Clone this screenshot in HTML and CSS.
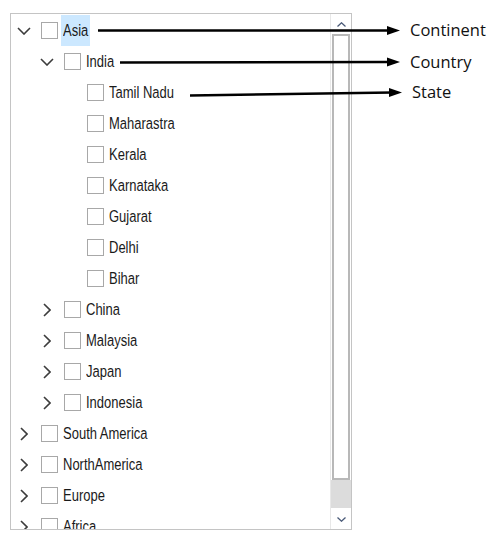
FILE: index.html
```html
<!DOCTYPE html>
<html>
<head>
<meta charset="utf-8">
<link rel="stylesheet" href="styles.css">
</head>
<body>
<div class="page">
  <div class="tree">
    <div class="list">
      <div class="row lvl0"><span class="toggle"><svg class="chev-down" viewBox="0 0 14 8"><path d="M1 1 L7 7 L13 1"/></svg></span><span class="check"></span><span class="label selected"><span class="txt">Asia</span></span></div>
      <div class="row lvl1"><span class="toggle"><svg class="chev-down" viewBox="0 0 14 8"><path d="M1 1 L7 7 L13 1"/></svg></span><span class="check"></span><span class="label"><span class="txt">India</span></span></div>
      <div class="row lvl2"><span class="toggle"></span><span class="check"></span><span class="label"><span class="txt">Tamil Nadu</span></span></div>
      <div class="row lvl2"><span class="toggle"></span><span class="check"></span><span class="label"><span class="txt">Maharastra</span></span></div>
      <div class="row lvl2"><span class="toggle"></span><span class="check"></span><span class="label"><span class="txt">Kerala</span></span></div>
      <div class="row lvl2"><span class="toggle"></span><span class="check"></span><span class="label"><span class="txt">Karnataka</span></span></div>
      <div class="row lvl2"><span class="toggle"></span><span class="check"></span><span class="label"><span class="txt">Gujarat</span></span></div>
      <div class="row lvl2"><span class="toggle"></span><span class="check"></span><span class="label"><span class="txt">Delhi</span></span></div>
      <div class="row lvl2"><span class="toggle"></span><span class="check"></span><span class="label"><span class="txt">Bihar</span></span></div>
      <div class="row lvl1"><span class="toggle"><svg class="chev-right" viewBox="0 0 8 14"><path d="M1 1 L7 7 L1 13"/></svg></span><span class="check"></span><span class="label"><span class="txt">China</span></span></div>
      <div class="row lvl1"><span class="toggle"><svg class="chev-right" viewBox="0 0 8 14"><path d="M1 1 L7 7 L1 13"/></svg></span><span class="check"></span><span class="label"><span class="txt">Malaysia</span></span></div>
      <div class="row lvl1"><span class="toggle"><svg class="chev-right" viewBox="0 0 8 14"><path d="M1 1 L7 7 L1 13"/></svg></span><span class="check"></span><span class="label"><span class="txt">Japan</span></span></div>
      <div class="row lvl1"><span class="toggle"><svg class="chev-right" viewBox="0 0 8 14"><path d="M1 1 L7 7 L1 13"/></svg></span><span class="check"></span><span class="label"><span class="txt">Indonesia</span></span></div>
      <div class="row lvl0"><span class="toggle"><svg class="chev-right" viewBox="0 0 8 14"><path d="M1 1 L7 7 L1 13"/></svg></span><span class="check"></span><span class="label"><span class="txt">South America</span></span></div>
      <div class="row lvl0"><span class="toggle"><svg class="chev-right" viewBox="0 0 8 14"><path d="M1 1 L7 7 L1 13"/></svg></span><span class="check"></span><span class="label"><span class="txt">NorthAmerica</span></span></div>
      <div class="row lvl0"><span class="toggle"><svg class="chev-right" viewBox="0 0 8 14"><path d="M1 1 L7 7 L1 13"/></svg></span><span class="check"></span><span class="label"><span class="txt">Europe</span></span></div>
      <div class="row lvl0"><span class="toggle"><svg class="chev-right" viewBox="0 0 8 14"><path d="M1 1 L7 7 L1 13"/></svg></span><span class="check"></span><span class="label"><span class="txt">Africa</span></span></div>
    </div>
    <div class="scrollbar">
      <div class="sb-btn"><svg class="sb-arrow" viewBox="0 0 9 5"><path d="M0.5 4.5 L4.5 0.8 L8.5 4.5"/></svg></div>
      <div class="sb-thumb"></div>
      <div class="sb-track"></div>
      <div class="sb-btn"><svg class="sb-arrow" viewBox="0 0 9 5"><path d="M0.5 0.5 L4.5 4.2 L8.5 0.5"/></svg></div>
    </div>
  </div>
  <svg class="annotations" viewBox="0 0 489 541">
    <line x1="98" y1="30.5" x2="390" y2="30.5" class="arrow-line"/>
    <polygon points="387,26 400,30.5 387,35" class="arrow-head"/>
    <line x1="120" y1="62.5" x2="390" y2="62" class="arrow-line"/>
    <polygon points="387,57.5 400,62 387,66.5" class="arrow-head"/>
    <line x1="190" y1="95.5" x2="392" y2="92.5" class="arrow-line"/>
    <polygon points="389,88 402,92.5 389,97" class="arrow-head"/>
    <text x="410" y="36" class="note">Continent</text>
    <text x="410" y="68" class="note">Country</text>
    <text x="412" y="98" class="note">State</text>
  </svg>
</div>
</body>
</html>
```
FILE: styles.css
```css
html, body {
  margin: 0;
  padding: 0;
  background: #ffffff;
}

.page {
  position: relative;
  width: 489px;
  height: 541px;
  padding: 13px 0 0 10px;
  box-sizing: border-box;
}

.tree {
  width: 342px;
  height: 517px;
  border: 1px solid #c4c4c4;
  box-sizing: border-box;
  display: flex;
  overflow: hidden;
  background: #fff;
}

.list {
  flex: 1;
  overflow: hidden;
  padding-top: 1px;
}

.row {
  display: flex;
  align-items: center;
  height: 31px;
  font-family: "Liberation Sans", Arial, sans-serif;
  font-size: 13px;
  color: #1a1a1a;
  white-space: nowrap;
}

.lvl0 { padding-left: 0; }
.lvl1 { padding-left: 23px; }
.lvl2 { padding-left: 46px; }

.toggle {
  width: 26px;
  height: 31px;
  display: flex;
  align-items: center;
  justify-content: center;
  flex: none;
}

.chev-down {
  width: 14px;
  height: 8px;
}

.chev-right {
  width: 8px;
  height: 14px;
}

.chev-down path,
.chev-right path {
  fill: none;
  stroke: #3c3c3c;
  stroke-width: 1.6;
}

.check {
  width: 17px;
  height: 17px;
  margin-left: 4px;
  border: 1px solid #a8a8a8;
  box-sizing: border-box;
  background: #fff;
  flex: none;
}

.label {
  margin-left: 3px;
  padding: 0 2px;
  height: 31px;
  line-height: 31px;
}

.txt {
  display: inline-block;
  transform: scaleY(1.22);
}

.label.selected {
  background: #cce8ff;
}

.scrollbar {
  width: 20px;
  flex: none;
  display: flex;
  flex-direction: column;
  border-left: 1px solid #e8e8e8;
  background: #ffffff;
}

.sb-btn {
  height: 20px;
  display: flex;
  align-items: center;
  justify-content: center;
  flex: none;
}

.sb-arrow {
  width: 9px;
  height: 5px;
}

.sb-arrow path {
  fill: none;
  stroke: #4a5a78;
  stroke-width: 1.3;
}

.sb-thumb {
  height: 446px;
  margin: 0 1px;
  border: 2px solid #b8b8b8;
  box-sizing: border-box;
  background: #ffffff;
  flex: none;
}

.sb-track {
  flex: 1;
  background: #dcdcdc;
  margin-bottom: 1px;
}

.annotations {
  position: absolute;
  top: 0;
  left: 0;
  width: 489px;
  height: 541px;
  pointer-events: none;
}

.arrow-line {
  stroke: #000;
  stroke-width: 2.4;
}

.arrow-head {
  fill: #000;
}

.note {
  font-family: "Open Sans", "Noto Sans", sans-serif;
  font-size: 16.5px;
  fill: #111;
}
```
